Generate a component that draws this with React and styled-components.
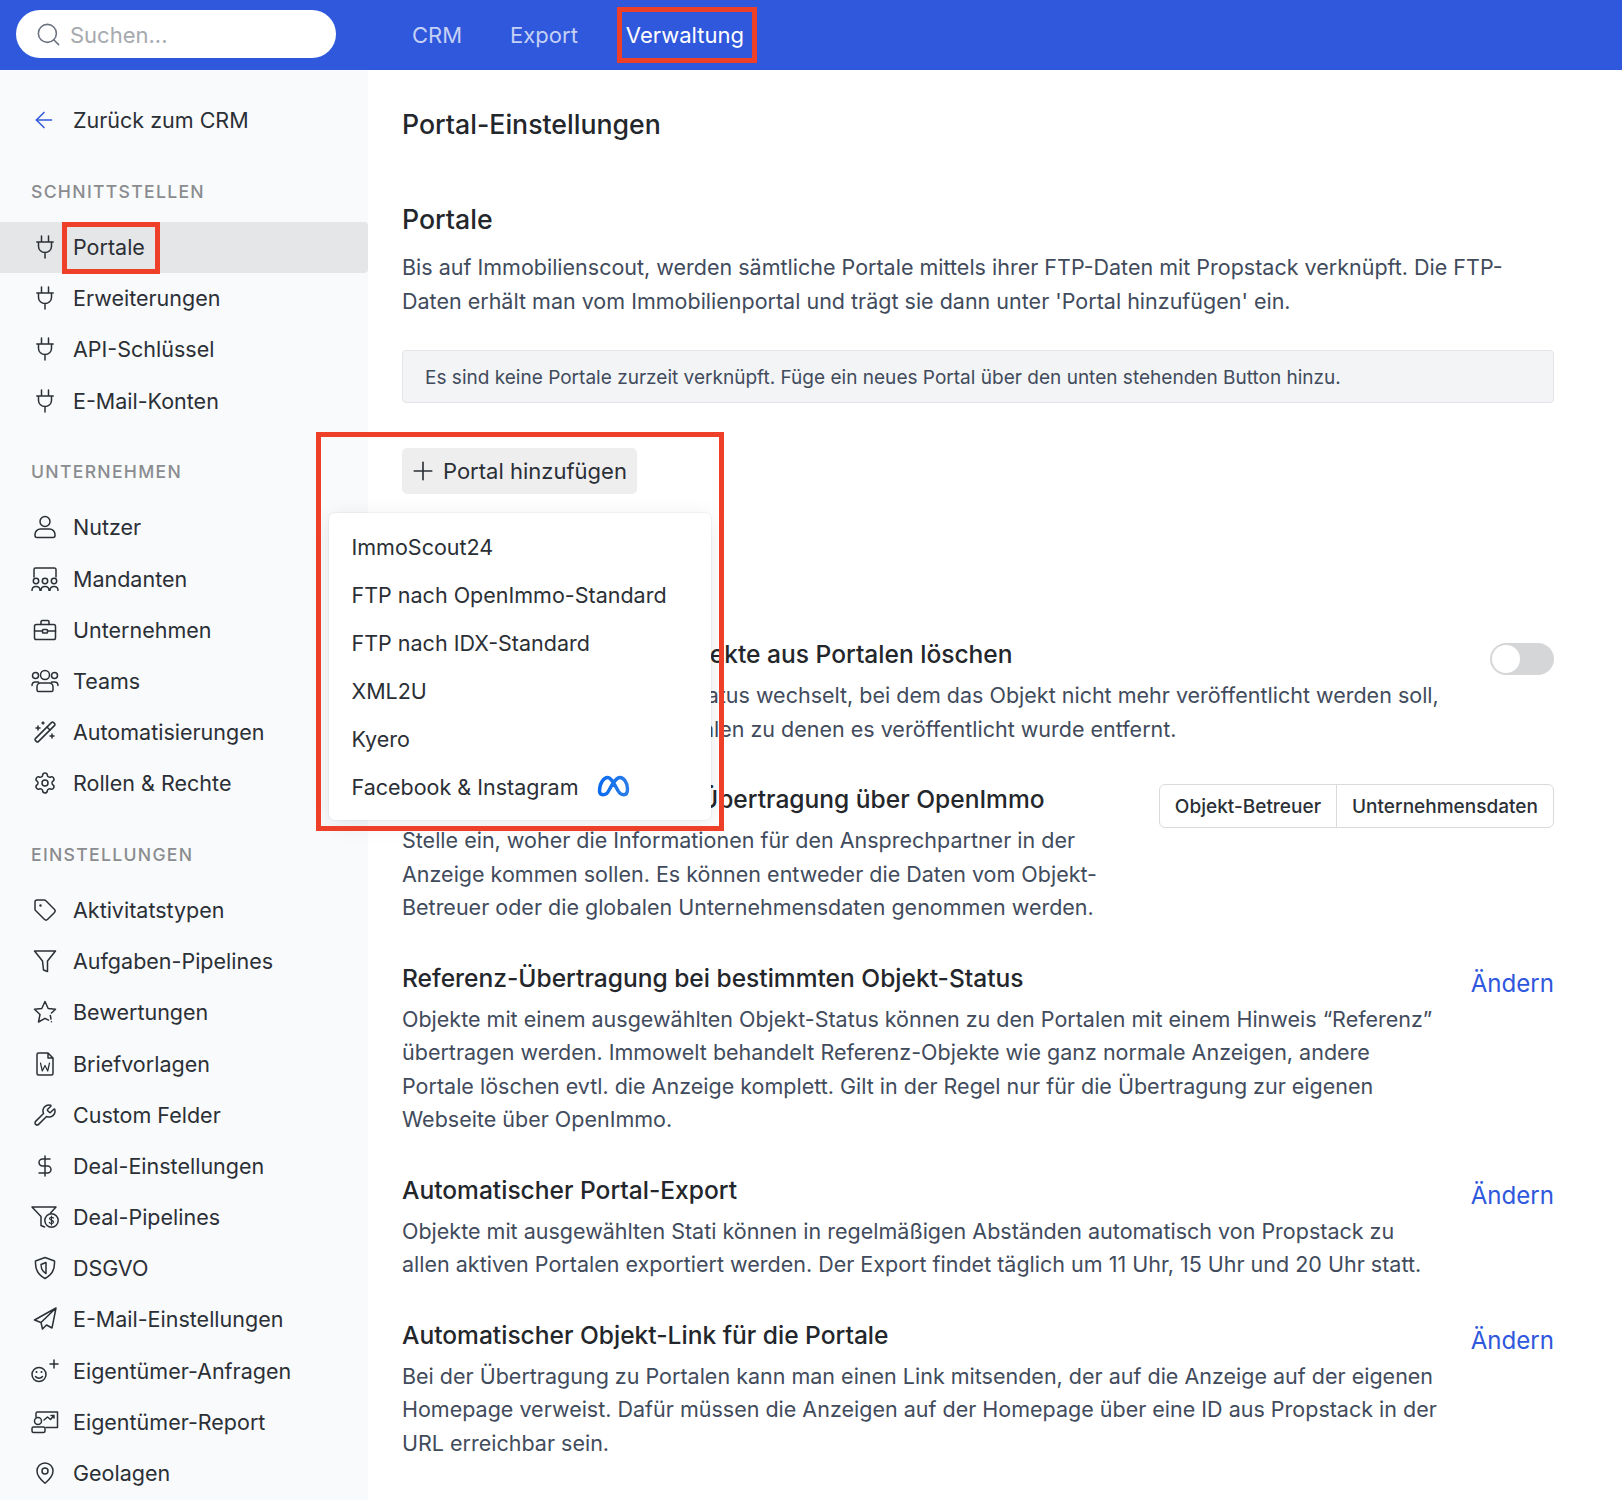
import React from 'react';
import styled, { createGlobalStyle } from 'styled-components';
import { ArrowLeft, Plus, Search, Settings, Tag, Wrench, DollarSign, MapPin, WandSparkles } from 'lucide-react';

const GlobalStyle = createGlobalStyle`
  html, body {
    margin: 0;
    height: 1500px;
    overflow: hidden;
    background: #fff;
    font-family: Inter, "Noto Sans", sans-serif;
    color: #2b2f36;
  }
`;

const Page = styled.div`
  height: 1500px;
  display: flex;
  flex-direction: column;
  overflow: hidden;
`;

const TopBar = styled.header`
  height: 70px;
  flex: none;
  background: #2f58dc;
  display: flex;
  align-items: center;
  padding-left: 16px;
`;

const SearchBox = styled.div`
  width: 320px;
  height: 48px;
  background: #fff;
  border-radius: 24px;
  display: flex;
  align-items: center;
  gap: 8px;
  padding-left: 19px;
  box-sizing: border-box;
  color: #6b7280;
  font-size: 22px;
  margin-top: -2px;
  span { color: #a6a9ae; position: relative; top: 1px; }
`;

const Nav = styled.nav`
  display: flex;
  gap: 48px;
  margin-left: 76px;
  margin-top: -1px;
`;

const NavItem = styled.a`
  position: relative;
  font-size: 22px;
  line-height: 34px;
  color: ${(p) => (p.$active ? '#fff' : '#c5d0f5')};
`;

const Annotation = styled.div`
  position: absolute;
  box-sizing: border-box;
  border: 5px solid #ee4028;
  pointer-events: none;
  z-index: 5;
`;

const NavAnnotation = styled(Annotation)`
  left: -9px;
  right: -13px;
  top: -11px;
  bottom: -11px;
`;

const RowAnnotation = styled(Annotation)`
  left: -11px;
  right: -15px;
  top: 0;
  bottom: -1px;
`;

const PopoverAnnotation = styled(Annotation)`
  left: -86px;
  top: -16px;
  width: 408px;
  height: 399px;
`;

const Body = styled.div`
  flex: 1;
  display: flex;
  min-height: 0;
`;

const Sidebar = styled.aside`
  width: 368px;
  flex: none;
  background: #f9fafb;
  padding-top: 33px;
  box-sizing: border-box;
`;

const BackLink = styled.a`
  display: flex;
  align-items: center;
  height: 34px;
  padding-left: 31px;
  gap: 16px;
  font-size: 21.5px;
  color: #2b2f36;
  svg { color: #2f58dc; flex: none; }
`;

const GroupLabel = styled.div`
  margin: ${(p) => (p.$first ? '42px' : '33px')} 0 16.5px 31px;
  height: 26px;
  line-height: 26px;
  font-size: 17.6px;
  font-weight: 500;
  letter-spacing: 1.3px;
  color: #8a8c8f;
  text-transform: uppercase;
`;

const SideRow = styled.a`
  height: 51.2px;
  display: flex;
  align-items: center;
  font-size: 21.5px;
  color: #2b2f36;
  background: ${(p) => (p.$active ? '#e5e6e8' : 'transparent')};
  border-radius: 0 4px 4px 0;
`;

const IconSlot = styled.span`
  width: 28px;
  margin: 0 14px 0 31px;
  flex: none;
  display: flex;
  justify-content: center;
  color: #2b2f36;
`;

const RowLabel = styled.span`
  position: relative;
  align-self: stretch;
  display: flex;
  align-items: center;
`;

const Main = styled.main`
  flex: 1;
  padding: 34px 68px 0 34px;
  min-width: 0;
`;

const PageTitle = styled.h1`
  margin: 0 0 58px;
  font-size: 26.7px;
  line-height: 40px;
  font-weight: 500;
  color: #23262b;
`;

const SectionTitle = styled.h2`
  margin: 0 0 ${(p) => (p.$large ? '15px' : '8px')};
  font-size: ${(p) => (p.$large ? '26.7px' : '24.55px')};
  line-height: 34px;
  font-weight: 500;
  color: #23262b;
`;

const Para = styled.p`
  margin: 0;
  font-size: 21.5px;
  line-height: 33.5px;
  color: #414b5c;
`;

const InfoBox = styled.div`
  margin-top: 32px;
  height: 53px;
  box-sizing: border-box;
  background: #f3f4f6;
  border: 1px solid #e2e4e8;
  border-radius: 4px;
  display: flex;
  align-items: center;
  padding: 1px 0 0 22px;
  font-size: 19.05px;
  color: #414b5c;
`;

const AddWrap = styled.div`
  position: relative;
  margin-top: 45px;
  height: 46px;
  margin-bottom: 143px;
`;

const AddButton = styled.button`
  height: 46px;
  width: 235px;
  display: flex;
  align-items: center;
  gap: 5px;
  padding: 0 0 0 6px;
  border: 0;
  border-radius: 5px;
  background: #eeeeef;
  font: inherit;
  font-size: 22px;
  color: #2b2f36;
`;

const Popover = styled.div`
  position: absolute;
  left: -73px;
  top: 65px;
  width: 382px;
  height: 307px;
  box-sizing: border-box;
  padding-top: 10px;
  background: #fff;
  border-radius: 6px;
  box-shadow: 0 0 0 1px rgba(0, 0, 0, 0.03), 0 4px 22px rgba(0, 0, 0, 0.09);
  z-index: 3;
`;

const PopItem = styled.div`
  height: 48px;
  padding-left: 22.5px;
  display: flex;
  align-items: center;
  gap: 19px;
  font-size: 21.5px;
  color: #2b2f36;
`;

const SettingRow = styled.section`
  display: flex;
  justify-content: space-between;
  align-items: flex-start;
  margin-bottom: 36px;
`;

const SettingText = styled.div`
  width: ${(p) => p.$width || '1040px'};
`;

const Toggle = styled.div`
  width: 64px;
  height: 32px;
  margin-top: 6px;
  flex: none;
  border-radius: 16px;
  background: #d5d6d8;
  padding: 2px;
  box-sizing: border-box;
  &::after {
    content: '';
    display: block;
    width: 28px;
    height: 28px;
    border-radius: 50%;
    background: #fff;
  }
`;

const Segmented = styled.div`
  display: flex;
  height: 44px;
  margin-top: 2px;
  box-sizing: border-box;
  border: 1px solid #d9dadc;
  border-radius: 6px;
`;

const Segment = styled.div`
  display: flex;
  align-items: center;
  padding: 0 15px;
  font-size: 19.05px;
  font-weight: 500;
  color: #2b2f36;
  & + & { border-left: 1px solid #d9dadc; }
`;

const ChangeLink = styled.a`
  font-size: 24.1px;
  line-height: 34px;
  margin-top: 6px;
  color: #2f58dc;
`;

const Svg = ({ children, wide }) => (
  <svg width={wide ? 28 : 24} height="24" viewBox={wide ? '0 0 28 24' : '0 0 24 24'} fill="none" stroke="currentColor" strokeWidth="1.5" strokeLinecap="round" strokeLinejoin="round">
    {children}
  </svg>
);

const PlugIcon = () => (
  <Svg>
    <path d="M8.500 1v6M15.500 1v6M3.800 7h16.400M5.500 7v4.500a6.500 6 0 0 0 13 0V7M12 17.500V23" />
  </Svg>
);
const UserIcon = () => (
  <Svg>
    <circle cx="12" cy="6.500" r="5" />
    <path d="M7.500 14h9a5.500 5.500 0 0 1 5.500 5.500v1A2 2 0 0 1 20 22.500H4a2 2 0 0 1-2-2v-1A5.500 5.500 0 0 1 7.500 14Z" />
  </Svg>
);
const TenantsIcon = () => (
  <Svg wide>
    <path d="M3 10V2.500A1.500 1.500 0 0 1 4.500 1h19A1.500 1.500 0 0 1 25 2.500V10" />
    <circle cx="5" cy="14" r="2.700" /><circle cx="14" cy="14" r="2.700" /><circle cx="23" cy="14" r="2.700" />
    <path d="M1 23.500c0-3 1.500-4 4-4s4 1 4 4M10 23.500c0-3 1.500-4 4-4s4 1 4 4M19 23.500c0-3 1.500-4 4-4s4 1 4 4" />
  </Svg>
);
const BriefcaseIcon = () => (
  <Svg>
    <rect x="1.500" y="6.500" width="21" height="15" rx="1.800" />
    <path d="M8 6.500V3.800A1.300 1.300 0 0 1 9.300 2.500h5.400A1.300 1.300 0 0 1 16 3.800v2.700M1.500 13h8M14.500 13h8" />
    <rect x="9.500" y="11.500" width="5" height="3.500" rx=".8" />
  </Svg>
);
const TeamsIcon = () => (
  <Svg wide>
    <circle cx="14" cy="6" r="4.500" /><circle cx="4.500" cy="6.500" r="3" /><circle cx="23.500" cy="6.500" r="3" />
    <path d="M9.500 14h9a3.500 3.500 0 0 1 3.500 3.500V21a1.500 1.500 0 0 1-1.500 1.500h-13A1.500 1.500 0 0 1 6 21v-3.500A3.500 3.500 0 0 1 9.500 14ZM1 16.500c0-2.500 1.500-3.500 3.500-3.500h3M27 16.500c0-2.500-1.500-3.500-3.500-3.500h-3" />
  </Svg>
);
const FunnelIcon = () => (
  <Svg>
    <path d="M1.500 2h21L14.500 12v10.500L10.500 21 9.500 12Z" />
  </Svg>
);
const StarIcon = () => (
  <Svg>
    <path d="M18.500 13 22.500 9.300 15.200 8.500 12 1.500 8.800 8.500 1.500 9.300 7 14.500 5.500 22 12 18.300 15.500 20.200M17.300 15.500 18 19M18.400 21.700h.01" />
  </Svg>
);
const WordIcon = () => (
  <Svg>
    <path d="M4 2.500A1.500 1.500 0 0 1 5.500 1h9.500L20 6v15.500a1.500 1.500 0 0 1-1.500 1.500h-13A1.500 1.500 0 0 1 4 21.500ZM15 1v5h5" />
    <path d="M7.500 11l1.800 8 2.700-5.500 2.700 5.500 1.800-8" strokeWidth="1.200" />
  </Svg>
);
const FunnelDollarIcon = () => (
  <Svg wide>
    <path d="M1 2h24l-5.500 6M1 2l9 9.500v9l3.500 1.500" />
    <circle cx="20.500" cy="15.500" r="6.700" />
    <path d="M22.500 13c-.5-.8-3.500-1.300-4 .5s4 1.500 4 3.500-3.500 1.800-4.200.5M20.500 11v9" strokeWidth="1.200" />
  </Svg>
);
const ShieldIcon = () => (
  <Svg>
    <path d="M12 1.500 21.500 5c.5 7.500-2.500 14-9.500 17.500C5 19 2 12.500 2.500 5Z" />
    <path d="M13 6.500v11c-3.500-2-5-5-5-9Z" />
  </Svg>
);
const SendIcon = () => (
  <Svg>
    <path d="M23 1 1.500 13l6.500 2.500 1.500 6.500 4-4 5.500 3ZM23 1 8 15.500" />
  </Svg>
);
const SmilePlusIcon = () => (
  <Svg wide>
    <circle cx="8" cy="15.500" r="7" />
    <path d="M4.500 17.500c1.800 2.300 5.200 2.300 7 0" />
    <path d="M5.500 13h.01M10.500 13h.01" strokeWidth="2" />
    <path d="M23 1v8M19 5h8" />
  </Svg>
);
const ReportIcon = () => (
  <Svg wide>
    <path d="M5 7V3.500A1.500 1.500 0 0 1 6.500 2h20v15.500H15" />
    <circle cx="7" cy="11" r="3.500" />
    <rect x="1" y="17" width="13" height="5.500" rx="1.500" />
    <path d="M13 10l3.500-3 3 2.500 3.500-4M20 5.500h3V8" />
  </Svg>
);

const groups = [
  {
    label: 'Schnittstellen',
    items: [
      { label: 'Portale', icon: <PlugIcon />, active: true },
      { label: 'Erweiterungen', icon: <PlugIcon /> },
      { label: 'API-Schlüssel', icon: <PlugIcon /> },
      { label: 'E-Mail-Konten', icon: <PlugIcon /> },
    ],
  },
  {
    label: 'Unternehmen',
    items: [
      { label: 'Nutzer', icon: <UserIcon /> },
      { label: 'Mandanten', icon: <TenantsIcon /> },
      { label: 'Unternehmen', icon: <BriefcaseIcon /> },
      { label: 'Teams', icon: <TeamsIcon /> },
      { label: 'Automatisierungen', icon: <WandSparkles size={24} strokeWidth={1.5} /> },
      { label: 'Rollen & Rechte', icon: <Settings size={24} strokeWidth={1.5} /> },
    ],
  },
  {
    label: 'Einstellungen',
    items: [
      { label: 'Aktivitatstypen', icon: <Tag size={24} strokeWidth={1.5} /> },
      { label: 'Aufgaben-Pipelines', icon: <FunnelIcon /> },
      { label: 'Bewertungen', icon: <StarIcon /> },
      { label: 'Briefvorlagen', icon: <WordIcon /> },
      { label: 'Custom Felder', icon: <Wrench size={24} strokeWidth={1.5} /> },
      { label: 'Deal-Einstellungen', icon: <DollarSign size={24} strokeWidth={1.5} /> },
      { label: 'Deal-Pipelines', icon: <FunnelDollarIcon /> },
      { label: 'DSGVO', icon: <ShieldIcon /> },
      { label: 'E-Mail-Einstellungen', icon: <SendIcon /> },
      { label: 'Eigentümer-Anfragen', icon: <SmilePlusIcon /> },
      { label: 'Eigentümer-Report', icon: <ReportIcon /> },
      { label: 'Geolagen', icon: <MapPin size={24} strokeWidth={1.5} /> },
    ],
  },
];

const portals = ['ImmoScout24', 'FTP nach OpenImmo-Standard', 'FTP nach IDX-Standard', 'XML2U', 'Kyero'];

const MetaLogo = () => (
  <svg width="33" height="24" viewBox="0 0 33 24" fill="none">
    <defs>
      <linearGradient id="meta" x1="0" y1="0" x2="1" y2="0">
        <stop offset="0" stopColor="#0a6cf0" />
        <stop offset="1" stopColor="#2a7ce8" />
      </linearGradient>
    </defs>
    <path d="M2.500 16C2.500 8 7 2.500 10.500 2.500c4 0 7.500 8 11 14 2 3.500 9 6 9-2.500 0-6.500-4-11.500-7.500-11.500-4.500 0-9 9-12 14.500-2 3.500-8.500 4-8.500-1Z" stroke="url(#meta)" strokeWidth="3.400" strokeLinejoin="round" />
  </svg>
);

const App = () => (
  <Page>
    <GlobalStyle />
    <TopBar>
      <SearchBox>
        <Search size={27} strokeWidth={1.4} />
        <span>Suchen...</span>
      </SearchBox>
      <Nav>
        <NavItem>CRM</NavItem>
        <NavItem>Export</NavItem>
        <NavItem $active>
          Verwaltung
          <NavAnnotation />
        </NavItem>
      </Nav>
    </TopBar>
    <Body>
      <Sidebar>
        <BackLink>
          <ArrowLeft size={26} strokeWidth={1.4} />
          Zurück zum CRM
        </BackLink>
        {groups.map((group, i) => (
          <div key={group.label}>
            <GroupLabel $first={i === 0}>{group.label}</GroupLabel>
            {group.items.map((item) => (
              <SideRow key={item.label} $active={item.active}>
                <IconSlot>{item.icon}</IconSlot>
                <RowLabel>
                  {item.label}
                  {item.active && <RowAnnotation />}
                </RowLabel>
              </SideRow>
            ))}
          </div>
        ))}
      </Sidebar>
      <Main>
        <PageTitle>Portal-Einstellungen</PageTitle>
        <SectionTitle $large>Portale</SectionTitle>
        <Para>
          Bis auf Immobilienscout, werden sämtliche Portale mittels ihrer FTP-Daten mit Propstack verknüpft. Die FTP-Daten erhält man vom Immobilienportal und trägt sie dann unter 'Portal hinzufügen' ein.
        </Para>
        <InfoBox>Es sind keine Portale zurzeit verknüpft. Füge ein neues Portal über den unten stehenden Button hinzu.</InfoBox>
        <AddWrap>
          <AddButton>
            <Plus size={30} strokeWidth={1.3} />
            Portal hinzufügen
          </AddButton>
          <Popover>
            {portals.map((name) => (
              <PopItem key={name}>{name}</PopItem>
            ))}
            <PopItem>
              Facebook &amp; Instagram
              <MetaLogo />
            </PopItem>
          </Popover>
          <PopoverAnnotation />
        </AddWrap>
        <SettingRow>
          <SettingText $width="1060px">
            <SectionTitle>{'Nicht\u2003veröffentlichte\u2009 Objekte aus Portalen löschen'}</SectionTitle>
            <Para>
              Sobald ein Objekt zu einem Status wechselt, bei dem das Objekt nicht mehr veröffentlicht werden soll, wird es danach von allen Portalen zu denen es veröffentlicht wurde entfernt.
            </Para>
          </SettingText>
          <Toggle />
        </SettingRow>
        <SettingRow>
          <SettingText $width="700px">
            <SectionTitle>{'Ansprechpartner bei der \u2009Übertragung über OpenImmo'}</SectionTitle>
            <Para>
              Stelle ein, woher die Informationen für den Ansprechpartner in der Anzeige kommen sollen. Es können entweder die Daten vom Objekt-Betreuer oder die globalen Unternehmensdaten genommen werden.
            </Para>
          </SettingText>
          <Segmented>
            <Segment>Objekt-Betreuer</Segment>
            <Segment>Unternehmensdaten</Segment>
          </Segmented>
        </SettingRow>
        <SettingRow>
          <SettingText>
            <SectionTitle>Referenz-Übertragung bei bestimmten Objekt-Status</SectionTitle>
            <Para>
              Objekte mit einem ausgewählten Objekt-Status können zu den Portalen mit einem Hinweis “Referenz” übertragen werden. Immowelt behandelt Referenz-Objekte wie ganz normale Anzeigen, andere Portale löschen evtl. die Anzeige komplett. Gilt in der Regel nur für die Übertragung zur eigenen Webseite über OpenImmo.
            </Para>
          </SettingText>
          <ChangeLink>Ändern</ChangeLink>
        </SettingRow>
        <SettingRow>
          <SettingText>
            <SectionTitle>Automatischer Portal-Export</SectionTitle>
            <Para>
              Objekte mit ausgewählten Stati können in regelmäßigen Abständen automatisch von Propstack zu allen aktiven Portalen exportiert werden. Der Export findet täglich um 11 Uhr, 15 Uhr und 20 Uhr statt.
            </Para>
          </SettingText>
          <ChangeLink>Ändern</ChangeLink>
        </SettingRow>
        <SettingRow>
          <SettingText>
            <SectionTitle>Automatischer Objekt-Link für die Portale</SectionTitle>
            <Para>
              Bei der Übertragung zu Portalen kann man einen Link mitsenden, der auf die Anzeige auf der eigenen Homepage verweist. Dafür müssen die Anzeigen auf der Homepage über eine ID aus Propstack in der URL erreichbar sein.
            </Para>
          </SettingText>
          <ChangeLink>Ändern</ChangeLink>
        </SettingRow>
      </Main>
    </Body>
  </Page>
);

export default App;
